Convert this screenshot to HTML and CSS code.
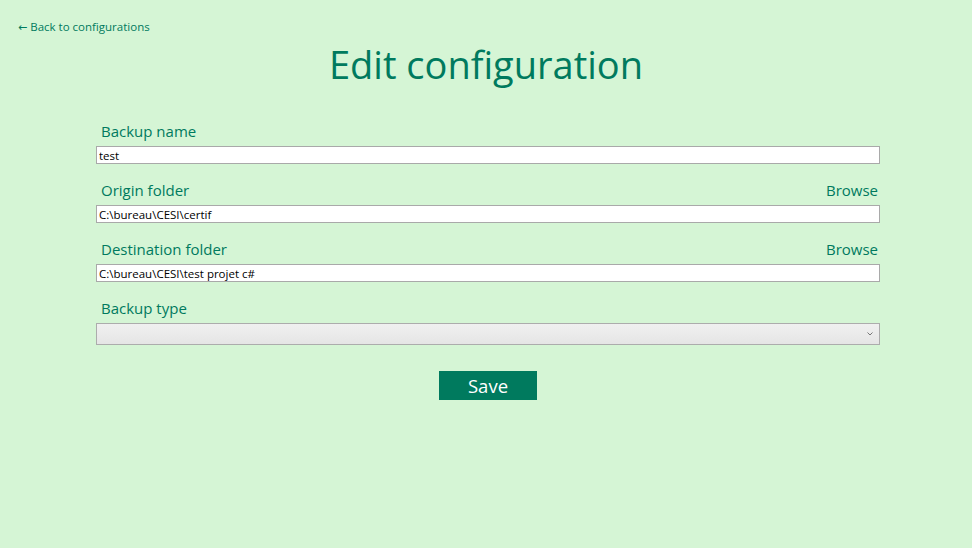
FILE: index.html
```html
<!DOCTYPE html>
<html>
<head>
<meta charset="utf-8">
<link rel="stylesheet" href="styles.css">
</head>
<body>
<div class="page">
  <a class="back" href="#"><span class="arrow">←</span> Back to configurations</a>
  <h1 class="title">Edit configuration</h1>
  <form class="form">
    <div class="field">
      <div class="label-row"><span class="label">Backup name</span></div>
      <input class="input" type="text" value="test">
    </div>
    <div class="field">
      <div class="label-row"><span class="label">Origin folder</span><span class="browse">Browse</span></div>
      <input class="input" type="text" value="C:\bureau\CESI\certif">
    </div>
    <div class="field">
      <div class="label-row"><span class="label">Destination folder</span><span class="browse">Browse</span></div>
      <input class="input" type="text" value="C:\bureau\CESI\test projet c#">
    </div>
    <div class="field">
      <div class="label-row"><span class="label">Backup type</span></div>
      <div class="select">
        <svg class="chev" width="6" height="4" viewBox="0 0 6 4"><path d="M0.5 0.5 L3 3 L5.5 0.5" fill="none" stroke="#777" stroke-width="1"/></svg>
      </div>
    </div>
    <div class="actions"><button class="save" type="button">Save</button></div>
  </form>
</div>
</body>
</html>
```
FILE: styles.css
```css
html, body {
  margin: 0;
  padding: 0;
  background: #d5f5d5;
  height: 100%;
}
body {
  font-family: "Open Sans", "Noto Sans", sans-serif;
  color: #007a5e;
}
.page {
  padding: 18px 18px 0;
  display: flex;
  flex-direction: column;
}
.back {
  font-size: 11.5px;
  color: #007a5e;
  text-decoration: none;
  line-height: 17px;
  align-self: flex-start;
}
.arrow {
  font-family: "DejaVu Sans", sans-serif;
  font-size: 11px;
}
.title {
  margin: 0;
  margin-top: 3px;
  text-align: center;
  font-weight: 400;
  font-size: 38px;
  line-height: 50px;
  color: #007a5e;
}
.form {
  margin: 32px 74px 0 78px;
  display: flex;
  flex-direction: column;
}
.field {
  display: flex;
  flex-direction: column;
  margin-bottom: 16px;
}
.label-row {
  display: flex;
  justify-content: space-between;
  padding: 0 2px 0 5px;
  font-size: 15px;
  line-height: 20px;
  margin-bottom: 5px;
}
.input {
  box-sizing: border-box;
  height: 18px;
  border: 1px solid #a9a9a9;
  background: #fff;
  margin: 0;
  padding: 0 2px;
  font-family: "Open Sans", "Noto Sans", sans-serif;
  font-size: 11.5px;
  color: #000;
  outline: none;
}
.select {
  box-sizing: border-box;
  height: 22px;
  border: 1px solid #acacac;
  background: linear-gradient(#f0f0f0, #e5e5e5);
  display: flex;
  align-items: center;
  justify-content: flex-end;
  padding-right: 6px;
}
.actions {
  display: flex;
  justify-content: center;
  margin-top: 10px;
}
.save {
  width: 98px;
  height: 29px;
  border: none;
  background: #007a5e;
  color: #fff;
  font-family: "Open Sans", "Noto Sans", sans-serif;
  font-size: 18.5px;
  padding: 0;
  line-height: 29px;
}
```
